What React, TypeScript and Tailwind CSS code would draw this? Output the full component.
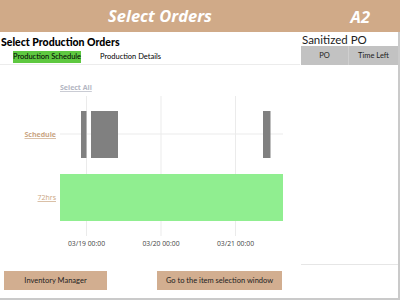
const openSans = { fontFamily: '"Open Sans", "Liberation Sans", sans-serif' };
const lato = { fontFamily: 'Lato, "Open Sans", "Liberation Sans", sans-serif' };

function ScheduleChart() {
  const grid = [86.5, 161, 235.5];
  const dates = ["03/19 00:00", "03/20 00:00", "03/21 00:00"];

  return (
    <svg width="300" height="200" viewBox="0 0 300 200" className="block" style={openSans}>
      <text x="60" y="25" fontSize="7" fontWeight="700" fill="#b3b6c2" textDecoration="underline">
        Select All
      </text>
      {grid.map((x) => (
        <line key={x} x1={x} x2={x} y1="31" y2="171" stroke="#ebebeb" strokeWidth="1" />
      ))}
      <line x1="60" x2="283" y1="69" y2="69" stroke="#ebebeb" strokeWidth="1" />
      <rect x="81" y="46" width="5.5" height="47" fill="#808080" />
      <rect x="91" y="46" width="27" height="47" fill="#808080" />
      <rect x="263" y="46" width="7.5" height="47" fill="#808080" />
      <rect x="60" y="109" width="223" height="47" fill="#90ee90" />
      <text x="56" y="72" textAnchor="end" fontSize="7" fontWeight="700" fill="#caa582" textDecoration="underline">
        Schedule
      </text>
      <text x="56" y="135" textAnchor="end" fontSize="7" fill="#caa582" textDecoration="underline">
        72hrs
      </text>
      {grid.map((x, i) => (
        <text key={x} x={x} y="181" textAnchor="middle" fontSize="6.8" fill="#444">
          {dates[i]}
        </text>
      ))}
    </svg>
  );
}

export default function App() {
  return (
    <div className="flex h-[300px] w-[400px] flex-col overflow-hidden bg-white" style={lato}>
      <header className="relative flex h-[32px] shrink-0 items-center justify-center bg-[#d0aa88]" style={openSans}>
        <h1 className="mr-[80px] text-[16.5px] font-bold italic text-white">Select Orders</h1>
        <span className="absolute right-[30px] top-[5px] text-[16.5px] font-bold italic text-white">A2</span>
      </header>

      <div className="flex flex-1 border-b-2 border-r-2 border-[#cacaca]">
        <section className="flex w-[300px] shrink-0 flex-col">
          <h2 className="whitespace-nowrap pl-[1px] pt-[3px] text-[10.5px] font-black leading-[15px] text-black">
            Select Production Orders
          </h2>
          <div className="flex h-[15px] items-center border-b border-[#ececec] pb-[2px] pt-[1px]">
            <span className="ml-[13px] flex h-[12px] w-[68px] items-center justify-center whitespace-nowrap bg-[#5ec840] text-[7.5px] text-black">
              Production Schedule
            </span>
            <span className="ml-[19px] whitespace-nowrap text-[7.5px] text-black">Production Details</span>
          </div>
          <ScheduleChart />
          <div className="mt-[6px] flex items-start">
            <button className="ml-[4px] flex h-[19px] w-[103px] items-center justify-center whitespace-nowrap bg-[#d2ae90] text-[7.5px] text-[#222]">
              Inventory Manager
            </button>
            <button className="ml-[50px] flex h-[19px] w-[125px] items-center justify-center whitespace-nowrap bg-[#d2ae90] text-[7.5px] text-[#222]">
              Go to the item selection window
            </button>
          </div>
        </section>

        <aside className="flex flex-1 flex-col pl-[1px]">
          <p className="pl-[1px] pt-[1px] text-[11.5px] leading-[13px] text-[#222]">Sanitized PO</p>
          <div className="flex h-[19px] bg-[#c2c2c2] text-[7.5px] text-[#222]">
            <span className="flex w-[48px] items-center justify-center border-r border-[#cfcfcf]">PO</span>
            <span className="flex flex-1 items-center justify-center">Time Left</span>
          </div>
          <div className="h-[200px] border-b border-[#e6e6e6]" />
        </aside>
      </div>
    </div>
  );
}
